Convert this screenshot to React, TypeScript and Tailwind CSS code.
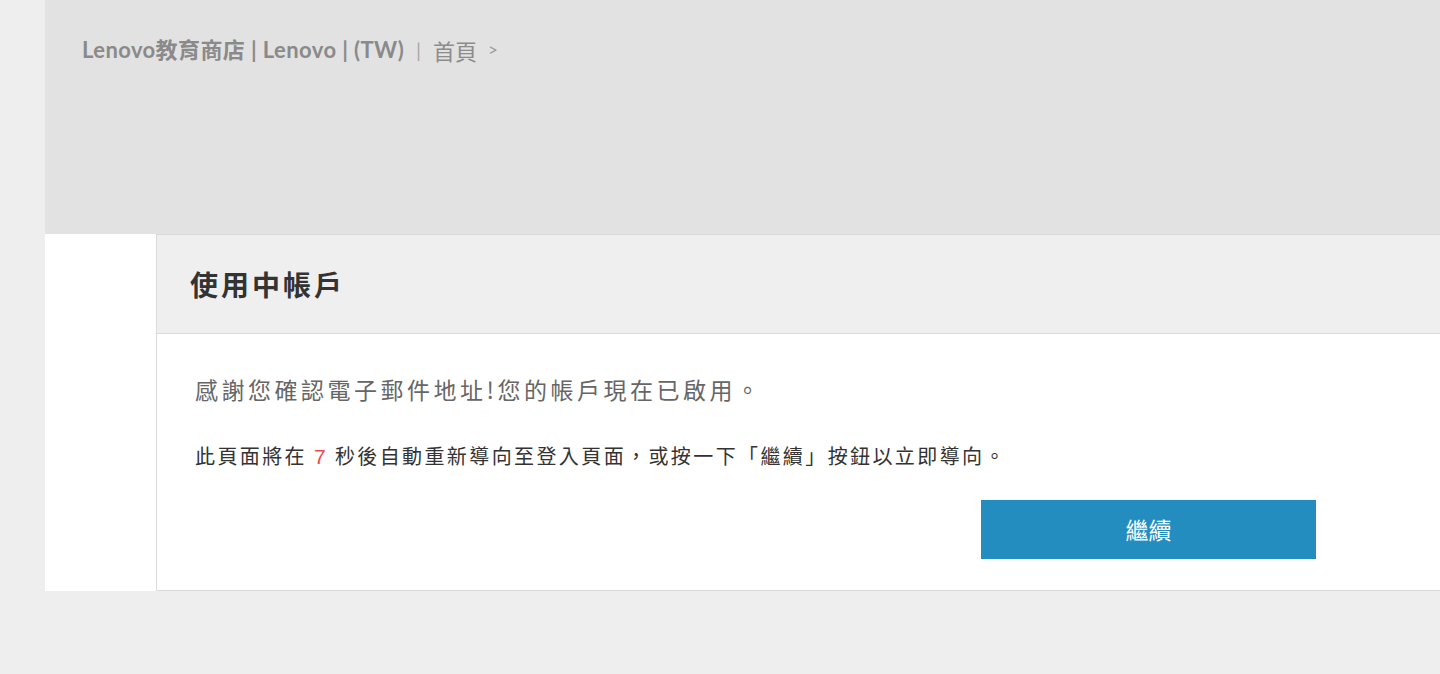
import React from "react";

export default function App() {
  const cjk = { fontFamily: '"Noto Sans CJK TC", "Noto Sans", sans-serif' };
  return (
    <div className="min-h-[674px] w-[1440px] overflow-hidden bg-[#eeeeee]">
      <div className="ml-[45px] w-[1395px]">
        <div className="h-[234px] bg-[#e2e2e2] pl-[37px] pt-[35px]">
          <div
            className="flex items-center text-[22px] leading-[30px] text-[#8a8a8a]"
            style={{ fontFamily: 'Lato, "Noto Sans CJK TC", sans-serif' }}
          >
            <span className="font-bold tracking-[0.4px]">Lenovo教育商店 | Lenovo | (TW)</span>
            <span className="ml-[12px] text-[20px] text-[#aaaaaa]">|</span>
            <span className="ml-[12px] text-[22px] font-normal text-[#8c8c8c]" style={cjk}>首頁</span>
            <span className="ml-[11px] text-[17px] text-[#999]">&gt;</span>
          </div>
        </div>
        <div className="bg-white pl-[111px]">
          <div className="w-[1400px] border-l border-t border-b border-[#dadada] bg-white">
            <div className="flex h-[99px] items-center border-b border-[#dadada] bg-[#efefef] pl-[33px]">
              <h1 className="text-[28px] font-semibold tracking-[3px] text-[#333]" style={cjk}>
                使用中帳戶
              </h1>
            </div>
            <div className="pl-[38px] pt-[39px] pb-[31px]">
              <div className="w-[1121px]">
                <p className="text-[23px] leading-[32px] tracking-[3.5px] text-[#666]" style={cjk}>
                  感謝您確認電子郵件地址!您的帳戶現在已啟用。
                </p>
                <p className="mt-[37px] text-[20px] leading-[28px] tracking-[2.4px] text-[#333]" style={cjk}>
                  此頁面將在{" "}
                  <span
                    className="text-[21px] text-[#f04a4a]"
                    style={{ fontFamily: '"Liberation Sans", Arial, sans-serif' }}
                  >
                    7
                  </span>{" "}
                  秒後自動重新導向至登入頁面，或按一下「繼續」按鈕以立即導向。
                </p>
                <div className="mt-[29px] flex justify-end">
                  <button
                    className="flex h-[59px] w-[335px] items-center justify-center bg-[#238dbf] text-[23px] text-white"
                    style={cjk}
                  >
                    繼續
                  </button>
                </div>
              </div>
            </div>
          </div>
        </div>
      </div>
    </div>
  );
}
